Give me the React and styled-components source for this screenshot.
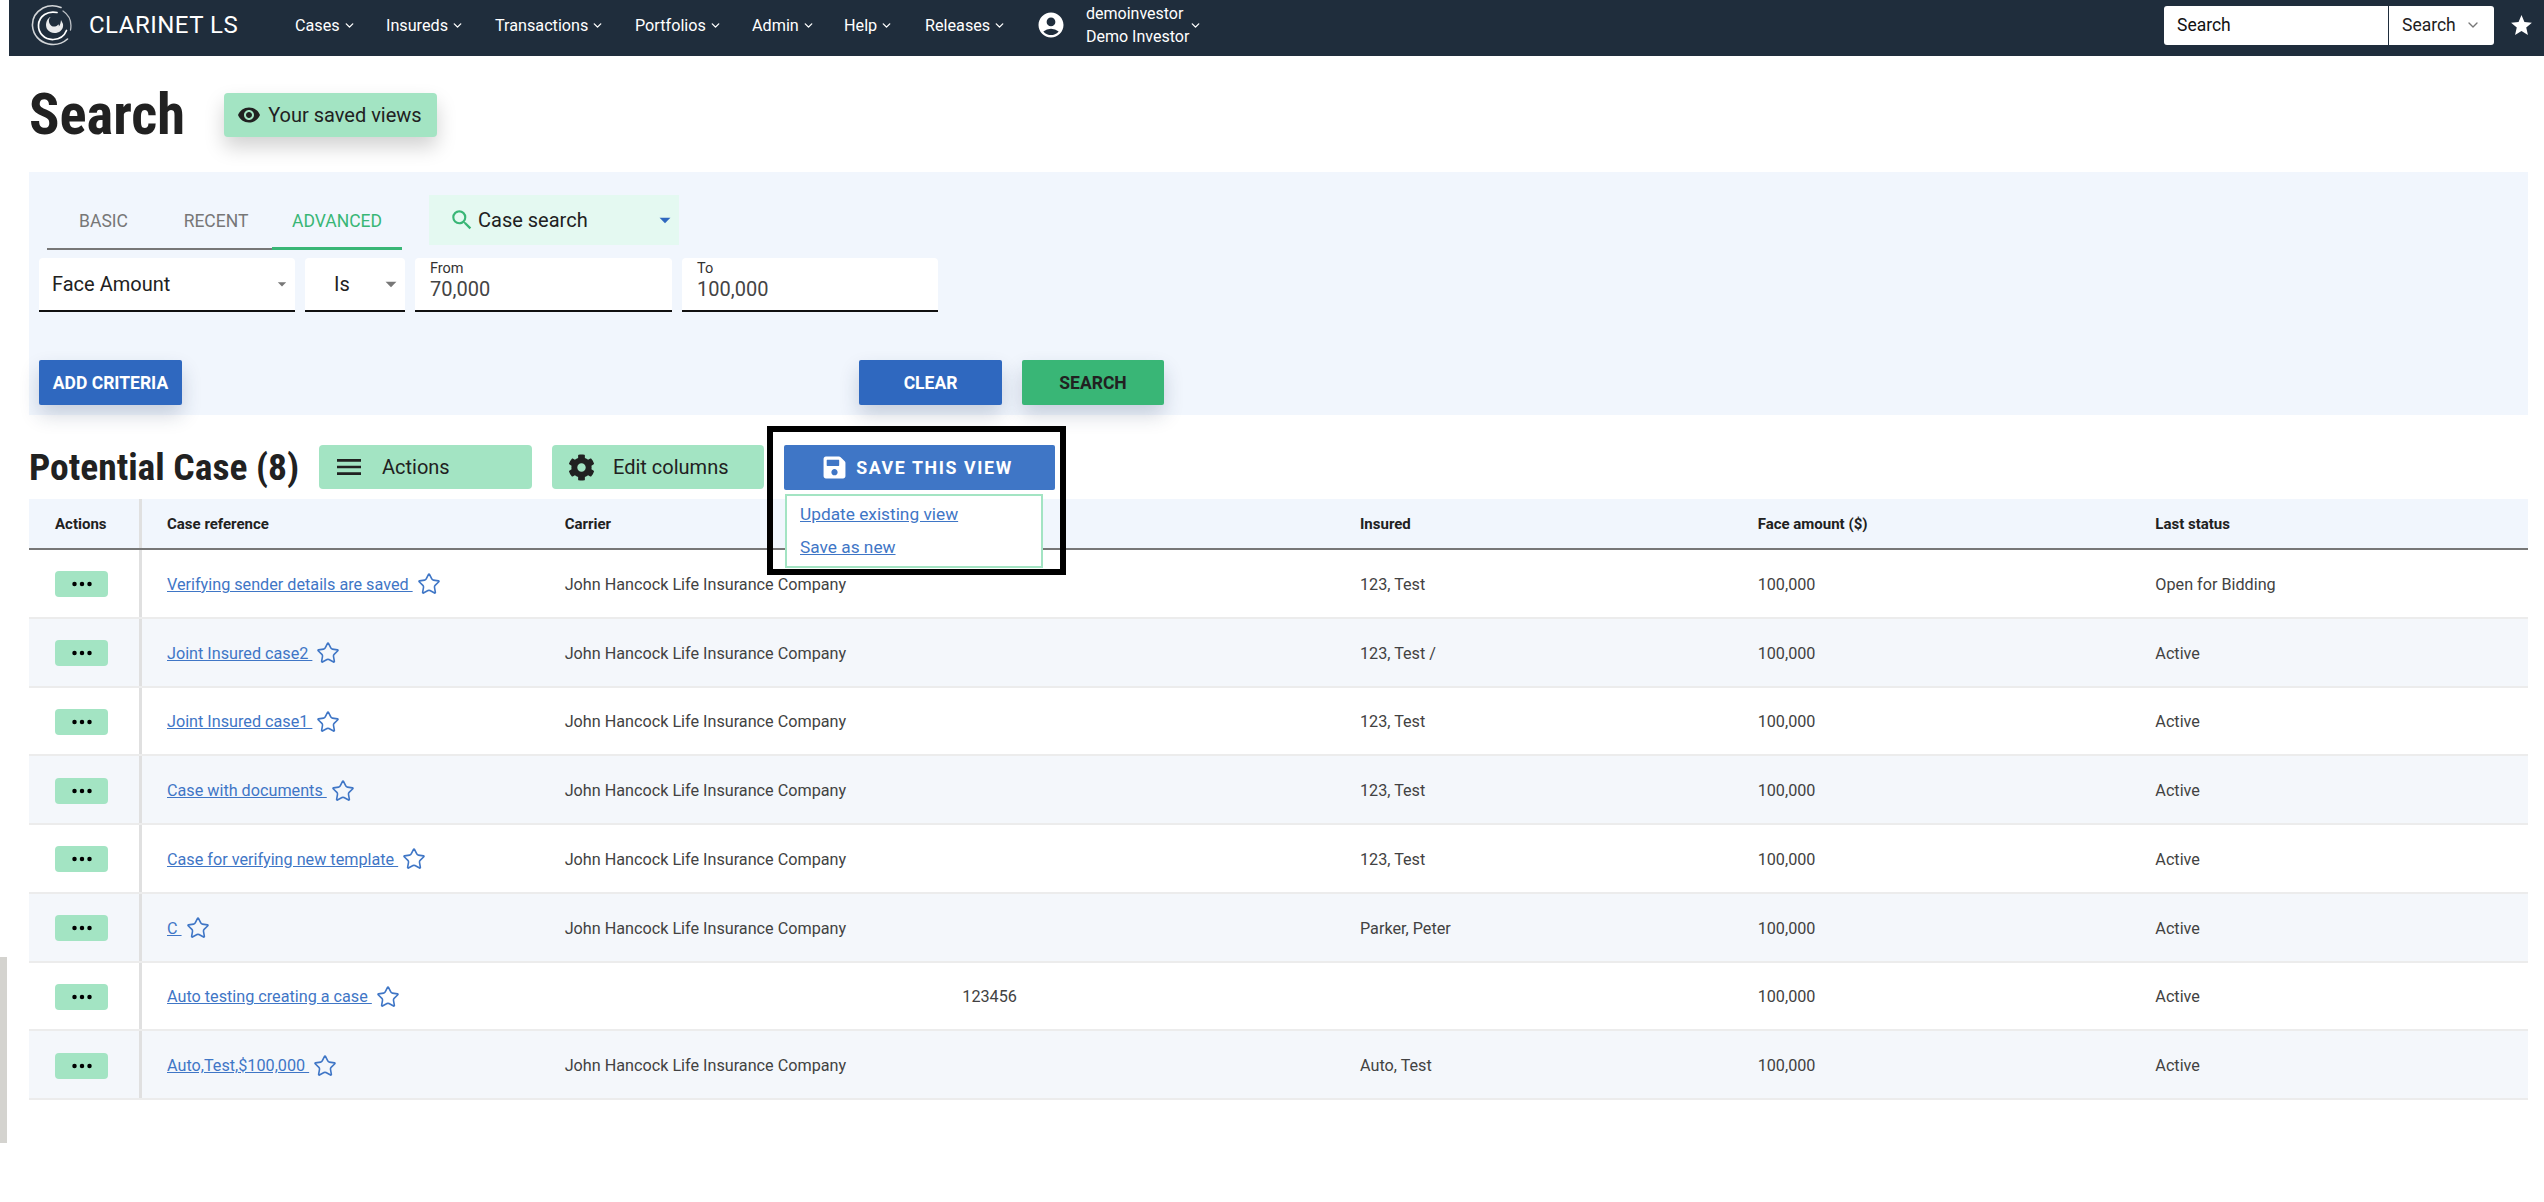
import React from 'react';
import styled, { createGlobalStyle } from 'styled-components';
import { ChevronDown, Star } from 'lucide-react';
import { MdVisibility, MdMenu, MdAccountCircle, MdSearch, MdStar, MdArrowDropDown } from 'react-icons/md';
import { FaCog, FaSave } from 'react-icons/fa';
import { BsThreeDots } from 'react-icons/bs';

const Global = createGlobalStyle`
  html, body { margin: 0; padding: 0; background: #fff; }
  body { font-family: Roboto, "Liberation Sans", sans-serif; color: #212121; width: 2544px; min-height: 1202px; overflow: hidden; }
  * { box-sizing: border-box; }
`;

const Page = styled.div`
  position: relative;
  width: 2544px;
  height: 1202px;
`;
const Nav = styled.header`
  margin-left: 9px;
  height: 56px;
  background: #1f2d3c;
  color: #fff;
  display: flex;
  align-items: center;
  padding: 0 0 6px 22px;
`;
const Brand = styled.div`
  display: flex;
  align-items: center;
  gap: 16px;
  font-size: 24px;
  width: 264px;
  letter-spacing: 0.5px;
  white-space: nowrap;
`;
const Menu = styled.nav`
  display: flex;
  align-items: center;
`;
const MenuItem = styled.div`
  display: flex;
  align-items: center;
  gap: 3px;
  font-size: 16.2px;
  width: ${p => p.$w}px;
  white-space: nowrap;
`;
const UserBlock = styled.div`
  display: flex;
  align-items: center;
  margin-left: -2px;
  gap: 20px;
  width: 180px;
`;
const UserNames = styled.div`
  font-size: 16px;
  line-height: 23px;
  white-space: nowrap;
`;
const UserCaret = styled.span`
  display: flex;
  margin-left: -20px;
`;
const NavRight = styled.div`
  margin-left: auto;
  display: flex;
  align-items: center;
  padding-right: 10px;
  gap: 15px;
`;
const SearchBox = styled.div`
  display: flex;
  width: 330px;
  height: 39px;
  background: #fff;
  border-radius: 3px;
  color: #212121;
  font-size: 17.5px;
  overflow: hidden;
`;
const SearchInput = styled.div`
  width: 224px;
  height: 38px;
  padding-left: 13px;
  display: flex;
  align-items: center;
  color: #111;
`;
const SearchSelect = styled.div`
  flex: 1;
  border-left: 1px solid #1f2d3c;
  padding-left: 13px;
  display: flex;
  align-items: center;
  gap: 9px;
  svg { color: #777; }
`;
const Heading = styled.div`
  display: flex;
  align-items: center;
  padding-left: 29px;
  height: 116px;
  padding-top: 1px;
  gap: 39px;
`;
const Title = styled.h1`
  margin: 0;
  font-size: 56.5px;
  font-weight: 700;
  font-stretch: condensed;
  color: #212121;
`;
const GreenButton = styled.button`
  border: 0;
  border-radius: 4px;
  background: #a3e4c3;
  color: #212121;
  font: 400 20px Roboto, sans-serif;
  display: flex;
  align-items: center;
  height: 44px;
  width: ${p => p.$w}px;
  margin-left: ${p => p.$ml || 0}px;
  padding-left: ${p => p.$pad}px;
  gap: ${p => p.$gap}px;
  white-space: nowrap;
  box-shadow: ${p => (p.$shadow ? '0 10px 20px rgba(0,0,0,.18)' : 'none')};
`;
const Panel = styled.section`
  margin-left: 29px;
  width: 2499px;
  height: 243px;
  background: #f1f6fd;
  padding: 23px 10px 0;
`;
const TabRow = styled.div`
  display: flex;
  align-items: flex-start;
  padding-left: 8px;
  height: 63px;
`;
const Tabs = styled.div`
  display: flex;
  height: 55px;
  border-bottom: 2px solid #777;
  margin-right: 27px;
`;
const Tab = styled.div`
  width: ${p => p.$w}px;
  height: 55px;
  display: flex;
  align-items: center;
  justify-content: center;
  font-size: 17.5px;
  padding-bottom: ${p => (p.$active ? '1px' : '4px')};
  text-transform: uppercase;
  color: ${p => (p.$active ? '#39b676' : '#777')};
  border-bottom: ${p => (p.$active ? '3px solid #39b676' : '0')};
`;
const CaseSearch = styled.div`
  width: 250px;
  height: 50px;
  background: #e4f9f1;
  display: flex;
  align-items: center;
  padding-left: 20px;
  gap: 3px;
  font-size: 20px;
  color: #212121;
  > svg { color: #39b676; }
`;
const Caret = styled.span`
  margin-left: auto;
  margin-right: ${p => p.$mr || 1}px;
  display: flex;
  color: ${p => p.$c};
`;
const Fields = styled.div`
  display: flex;
  gap: 10px;
`;
const Field = styled.div`
  width: ${p => p.$w}px;
  height: 54px;
  background: #fff;
  border-radius: 4px 4px 0 0;
  border-bottom: 2px solid #111;
  padding: ${p => (p.$label ? '3px 0 0 15px' : '0 0 0 13px')};
  display: flex;
  flex-direction: ${p => (p.$label ? 'column' : 'row')};
  align-items: ${p => (p.$label ? 'flex-start' : 'center')};
  font-size: 20px;
  color: #212121;
`;
const IsText = styled.span`
  margin-left: 16px;
`;
const FieldLabel = styled.span`
  font-size: 14.5px;
  line-height: 16px;
  color: #333;
`;
const FieldValue = styled.span`
  font-size: 20px;
  line-height: 24px;
  color: #444;
`;
const ActionRow = styled.div`
  display: flex;
  margin-top: 48px;
`;
const PrimaryButton = styled.button`
  border: 0;
  border-radius: 2px;
  width: ${p => p.$w}px;
  height: 45px;
  margin-left: ${p => p.$ml || 0}px;
  padding: 0;
  background: ${p => p.$bg};
  color: ${p => p.$fg};
  font: 700 17.5px Roboto, sans-serif;
  text-transform: uppercase;
  box-shadow: 0 10px 20px rgba(30,50,90,.2);
`;
const SectionBar = styled.div`
  display: flex;
  align-items: center;
  margin: 30px 0 10px 29px;
  height: 44px;
`;
const SectionTitle = styled.h2`
  margin: 0;
  width: 290px;
  font-size: 37.5px;
  font-weight: 700;
  font-stretch: condensed;
  color: #212121;
  white-space: nowrap;
`;
const SaveWrap = styled.div`
  position: relative;
  margin-left: 20px;
  width: 271px;
  height: 45px;
`;
const SaveButton = styled.button`
  width: 100%;
  height: 100%;
  border: 0;
  border-radius: 2px;
  background: #3f76c6;
  color: #fff;
  font: 700 17.8px Roboto, sans-serif;
  letter-spacing: 1.6px;
  display: flex;
  align-items: center;
  justify-content: center;
  gap: 9px;
  padding: 0 4px 0 0;
`;
const Highlight = styled.div`
  position: absolute;
  left: -17px;
  top: -19px;
  width: 299px;
  height: 149px;
  border: 6px solid #000;
  z-index: 3;
  pointer-events: none;
`;
const Dropdown = styled.div`
  position: absolute;
  left: 1px;
  top: 49px;
  width: 258px;
  height: 74px;
  background: #fff;
  border: 2px solid #a3e4c3;
  display: flex;
  flex-direction: column;
  padding: 8px 0 0 13px;
  gap: 12px;
  z-index: 2;
`;
const DropLink = styled.a`
  font-size: 17.3px;
  line-height: 21px;
  color: #3f76c6;
  text-decoration: underline;
`;
const Table = styled.div`
  margin-left: 29px;
  width: 2499px;
`;
const Row = styled.div`
  display: grid;
  grid-template-columns: 113px repeat(6, 1fr);
  height: ${p => (p.$head ? '51px' : '68.75px')};
  background: ${p => (p.$head ? '#f1f6fd' : p.$alt ? '#f4f7fb' : '#fff')};
  border-bottom: ${p => (p.$head ? '2px solid #777' : '2px solid #ececec')};
`;
const Cell = styled.div`
  display: flex;
  align-items: center;
  padding: 2px 0 0 25px;
  font-size: 16.2px;
  white-space: nowrap;
  color: #424242;
`;
const HeadCell = styled(Cell)`
  padding-top: 0;
  font-size: 15px;
  font-weight: 700;
  color: #212121;
`;
const ActionCell = styled.div`
  display: flex;
  align-items: center;
  padding: ${p => (p.$head ? '0' : '2px')} 0 0 26px;
  border-right: 3px solid #e0e0e0;
  font-size: 15px;
  font-weight: 700;
  color: #212121;
`;
const DotsButton = styled.button`
  width: 53px;
  height: 26px;
  padding: 0;
  border: 0;
  border-radius: 4px;
  background: #a3e4c3;
  display: flex;
  align-items: center;
  justify-content: center;
  color: #000;
`;
const CaseLink = styled.a`
  color: #3f76c6;
  text-decoration: underline;
  white-space: pre;
`;
const StarIcon = styled(Star)`
  margin-left: 4px;
  color: #3f76c6;
`;
const ScrollMark = styled.div`
  position: absolute;
  left: 0;
  top: 957px;
  width: 7px;
  height: 186px;
  background: #d4d3cf;
`;
const Logo = () => (
  <svg width="42" height="44" viewBox="0 0 42 44" fill="none" stroke="#fff" strokeLinecap="round">
    <path d="M30 4.500C25 2.500 18 2 12 5 5 9 1 15 1.500 23c.7 9 7 16 16 18 7 1.400 14-.5 19-5" strokeWidth="1.600" opacity=".8" />
    <path d="M39.500 27c1.500-8-1.500-15-7.500-19" strokeWidth="1.300" opacity=".7" />
    <path d="M26 9.500C17 7.500 8 12.500 7.500 22c-.4 8 6 15 15 14.500 6-.3 11-4 13-9" strokeWidth="1.700" />
    <path d="M19 14c-4 3-5 8-3 12 3 4.500 9 5.500 13.500 2 2-1.800 3-4 2.500-7l-2-4c-.3 3-.8 5-2.200 6.500.2-1.500 0-2.500-1-1.500-2.500 2.500-6.500 2-8-1-1.300-2.500-1.300-5 .7-7z" fill="#fff" stroke="none" opacity=".9" />
  </svg>
);

const menu = [['Cases', 91], ['Insureds', 109], ['Transactions', 140], ['Portfolios', 117], ['Admin', 92], ['Help', 81], ['Releases', 113]];
const company = 'John Hancock Life Insurance Company';
const rows = [
  ['Verifying sender details are saved ', company, '', '123, Test', '100,000', 'Open for Bidding'],
  ['Joint Insured case2 ', company, '', '123, Test /', '100,000', 'Active'],
  ['Joint Insured case1 ', company, '', '123, Test', '100,000', 'Active'],
  ['Case with documents ', company, '', '123, Test', '100,000', 'Active'],
  ['Case for verifying new template ', company, '', '123, Test', '100,000', 'Active'],
  ['C ', company, '', 'Parker, Peter', '100,000', 'Active'],
  ['Auto testing creating a case ', '', '123456', '', '100,000', 'Active'],
  ['Auto,Test,$100,000 ', company, '', 'Auto, Test', '100,000', 'Active'],
];

export default function App() {
  return (
    <Page>
      <Global />
      <Nav>
        <Brand><Logo />CLARINET LS</Brand>
        <Menu>
          {menu.map(([t, w]) => (
            <MenuItem key={t} $w={w}>{t}<ChevronDown size={13} strokeWidth={2.5} /></MenuItem>
          ))}
        </Menu>
        <UserBlock>
          <MdAccountCircle size={30} />
          <UserNames>demoinvestor<br />Demo Investor</UserNames>
          <UserCaret><ChevronDown size={13} strokeWidth={2.5} /></UserCaret>
        </UserBlock>
        <NavRight>
          <SearchBox>
            <SearchInput>Search</SearchInput>
            <SearchSelect>Search<ChevronDown size={16} /></SearchSelect>
          </SearchBox>
          <MdStar size={25} />
        </NavRight>
      </Nav>
      <Heading>
        <Title>Search</Title>
        <GreenButton $w={213} $pad={13} $gap={7} $shadow><MdVisibility size={24} />Your saved views</GreenButton>
      </Heading>
      <Panel>
        <TabRow>
          <Tabs>
            <Tab $w={113}>Basic</Tab>
            <Tab $w={112}>Recent</Tab>
            <Tab $w={130} $active>Advanced</Tab>
          </Tabs>
          <CaseSearch>
            <MdSearch size={26} />Case search
            <Caret $c="#2f68bf"><MdArrowDropDown size={26} /></Caret>
          </CaseSearch>
        </TabRow>
        <Fields>
          <Field $w={256}>Face Amount<Caret $c="#777" $mr={3}><MdArrowDropDown size={20} /></Caret></Field>
          <Field $w={100}><IsText>Is</IsText><Caret $c="#777"><MdArrowDropDown size={26} /></Caret></Field>
          <Field $w={257} $label><FieldLabel>From</FieldLabel><FieldValue>70,000</FieldValue></Field>
          <Field $w={256} $label><FieldLabel>To</FieldLabel><FieldValue>100,000</FieldValue></Field>
        </Fields>
        <ActionRow>
          <PrimaryButton $w={143} $bg="#2f68bf" $fg="#fff">Add criteria</PrimaryButton>
          <PrimaryButton $w={143} $ml={677} $bg="#2f68bf" $fg="#fff">Clear</PrimaryButton>
          <PrimaryButton $w={142} $ml={20} $bg="#39b676" $fg="#212121">Search</PrimaryButton>
        </ActionRow>
      </Panel>
      <SectionBar>
        <SectionTitle>Potential Case (8)</SectionTitle>
        <GreenButton $w={213} $pad={14} $gap={17}><MdMenu size={32} />Actions</GreenButton>
        <GreenButton $w={212} $ml={20} $pad={16} $gap={18}><FaCog size={27} />Edit columns</GreenButton>
        <SaveWrap>
          <SaveButton><FaSave size={25} />SAVE THIS VIEW</SaveButton>
          <Dropdown>
            <DropLink>Update existing view</DropLink>
            <DropLink>Save as new</DropLink>
          </Dropdown>
          <Highlight />
        </SaveWrap>
      </SectionBar>
      <Table>
        <Row $head>
          <ActionCell $head>Actions</ActionCell>
          {['Case reference', 'Carrier', '', 'Insured', 'Face amount ($)', 'Last status'].map((h, i) => <HeadCell key={i}>{h}</HeadCell>)}
        </Row>
        {rows.map((r, i) => (
          <Row key={i} $alt={i % 2 === 1}>
            <ActionCell><DotsButton><BsThreeDots size={24} /></DotsButton></ActionCell>
            <Cell><CaseLink>{r[0]}</CaseLink><StarIcon size={24} strokeWidth={1.6} /></Cell>
            {r.slice(1).map((c, j) => <Cell key={j}>{c}</Cell>)}
          </Row>
        ))}
      </Table>
      <ScrollMark />
    </Page>
  );
}
